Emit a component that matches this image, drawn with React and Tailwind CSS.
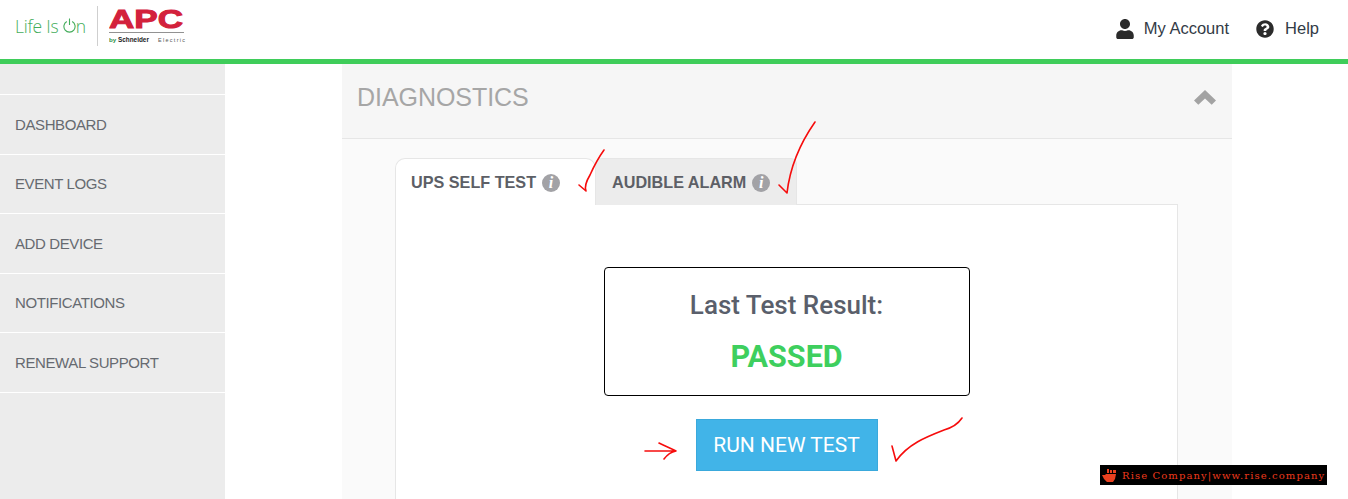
import React from 'react';
import { FaUser, FaQuestionCircle } from 'react-icons/fa';

const navItems = ['DASHBOARD', 'EVENT LOGS', 'ADD DEVICE', 'NOTIFICATIONS', 'RENEWAL SUPPORT'];

const Logo = () => (
  <div className="flex items-center h-[40px] mt-[6px] pl-[15px]">
    <div className="flex items-center pt-[1px] text-[17.5px] leading-none text-[#45ad5c] font-['Open_Sans',sans-serif] font-light tracking-[-0.2px] w-[72px]">
      <span>Life Is&nbsp;</span>
      <svg width="13" height="17" viewBox="0 0 13 17" fill="none" stroke="#45ad5c" strokeWidth="1.1" className="-mt-[3px] shrink-0">
        <path d="M3.800 4.600a5.600 5.600 0 1 0 5.400 0" />
        <path d="M6.500 1.500v6.500" />
      </svg>
      <span>n</span>
    </div>
    <div className="w-[1px] h-[40px] bg-[#cfcfcf] ml-[10px] mr-[11px]" />
    <svg width="78" height="44" viewBox="0 0 78 44" className="self-start -mt-[4px]">
      <text x="0" y="26" textLength="74" lengthAdjust="spacingAndGlyphs" fontFamily="Liberation Sans" fontWeight="700" fontSize="26" fill="#d3213c" stroke="#d3213c" strokeWidth="1">APC</text>
      <rect x="0" y="30" width="75" height="0.8" fill="#777777" />
      <text x="0" y="40" fontFamily="Liberation Sans" fontWeight="700" fontSize="6.200" fill="#2f8f46">by</text>
      <text x="9" y="40" fontFamily="Liberation Sans" fontWeight="700" fontSize="6.400" fill="#222222">Schneider</text>
      <text x="49" y="40" textLength="27" fontFamily="Liberation Sans" fontSize="5.400" fill="#555555">Electric</text>
    </svg>
  </div>
);

const InfoDot = () => (
  <span className="w-[18px] h-[18px] rounded-full bg-[#a2a2a6] text-white flex items-center justify-center font-['Liberation_Serif',serif] italic font-bold text-[16px] leading-none">
    i
  </span>
);

const Marks = () => (
  <svg className="absolute left-0 top-0 z-20 pointer-events-none" width="1348" height="499" fill="none" stroke="#f60c0c" strokeWidth="1.6" strokeLinecap="round" strokeLinejoin="round">
    <path d="M579 185l7 6c-2-5 1-11 4-16 4-9 9-18 14-25" />
    <path d="M779 185l8 8c3-26 14-51 28-71" />
    <path d="M645 451h30M659 443c6 3 11 5 17 8-5 1-9 4-12 8" />
    <path d="M892 446l4 15c12-17 30-24 48-31 7-2 14-6 18-12" />
  </svg>
);

export default function App() {
  return (
    <div className="relative h-[499px] overflow-hidden bg-white font-['Liberation_Sans',sans-serif]">
      <header className="flex justify-between items-start h-[59px]">
        <Logo />
        <nav className="flex items-center h-[57px] pr-[29px] text-[16.5px] text-[#333b46]">
          <FaUser className="text-[20px] text-[#2b2b2b] mr-[9px]" />
          <span>My Account</span>
          <FaQuestionCircle className="text-[18px] text-[#2b2b2b] ml-[27px] mr-[11px]" />
          <span>Help</span>
        </nav>
      </header>
      <div className="h-[5px] bg-[#3fcd5a]" />
      <div className="flex h-[435px]">
        <aside className="w-[225px] bg-[#ececec] pt-[30px] shrink-0">
          {navItems.map((item) => (
            <div key={item} className="h-[59.6px] last:h-[60.6px] flex items-center pl-[15px] pt-[1px] border-t border-white last:border-b text-[15px] tracking-[-0.4px] text-[#666a70]">
              {item}
            </div>
          ))}
        </aside>
        <main className="flex-1 pl-[117px]">
          <section className="w-[890px] h-full bg-[#fafafa]">
            <div className="flex items-center justify-between h-[75px] px-[15px] bg-[#f6f6f6] border-b border-[#e6e6e6]">
              <h2 className="text-[25px] tracking-[-0.05px] text-[#a6a6a6] pb-[6px]">DIAGNOSTICS</h2>
              <svg width="22" height="15" viewBox="0 0 22 15" fill="#a3a3a3" className="mr-[1px] mb-[7px]">
                <path d="M11 0l11 10.500-4.300 4.300L11 8.500 4.300 14.800 0 10.500z" />
              </svg>
            </div>
            <div className="pl-[53px] pt-[19px] w-[836px]">
              <div className="flex h-[47px] relative z-10 text-[16.2px] font-bold text-[#5d5f66]">
                <div className="w-[201px] flex items-center gap-[6px] pl-[15px] pt-[1px] bg-white border border-b-0 border-[#e6e6e6] rounded-t-[10px]">
                  UPS SELF TEST
                  <InfoDot />
                </div>
                <div className="w-[201px] flex items-center gap-[6px] pl-[16px] pt-[1px] bg-[#ececec] border border-l-0 border-b-0 border-[#e6e6e6] rounded-t-[6px]">
                  AUDIBLE ALARM
                  <InfoDot />
                </div>
              </div>
              <div className="-mt-[1px] h-[300px] bg-white border border-[#e6e6e6] flex flex-col items-center pt-[62px] font-['Roboto',sans-serif]">
                <div className="w-[366px] h-[129px] border border-black rounded-[4px] flex flex-col items-center pt-[21px]">
                  <p className="text-[26px] leading-[32px] font-medium text-[#5a5f6b]">Last Test Result:</p>
                  <p className="text-[30.5px] leading-[36px] font-bold text-[#3ecf5e] mt-[18px]">PASSED</p>
                </div>
                <button className="w-[182px] h-[52px] mt-[23px] pt-[1px] bg-[#41b4e8] border border-[#3aa9dc] text-white text-[21px]">
                  RUN NEW TEST
                </button>
              </div>
            </div>
          </section>
        </main>
      </div>
      <Marks />
      <div className="absolute left-[1100px] top-[465px] z-20 w-[227px] h-[20px] bg-black flex items-center pl-[2px] font-['DejaVu_Serif',serif] text-[10px] tracking-[1.1px] text-[#ee3a1c] whitespace-nowrap">
        <svg width="15" height="13" viewBox="0 0 15 13" fill="#e8401f" className="mr-[5px] shrink-0">
          <path d="M0 6l3 0 1-1h10l-1 5-2 3H5L2 10zM5 0h2v4H5zM8 1h2v3H8zM11 1h3v3h-3z" />
        </svg>
        Rise Company|www.rise.company
      </div>
    </div>
  );
}
